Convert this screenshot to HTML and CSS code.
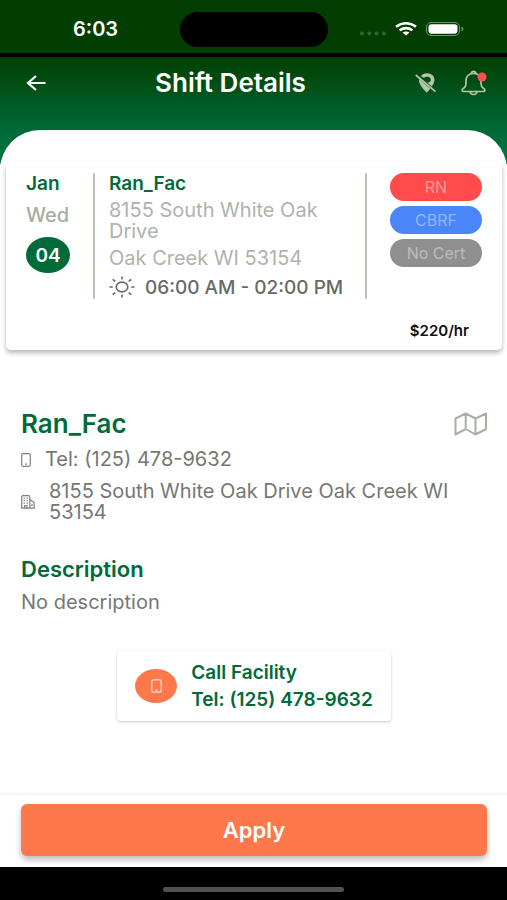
FILE: index.html
```html
<!DOCTYPE html>
<html lang="en">
<head>
<meta charset="utf-8">
<meta name="viewport" content="width=device-width, initial-scale=1">
<title>Shift Details</title>
<link rel="stylesheet" href="styles.css">
</head>
<body>
<div class="status">
  <span class="clock">6:03</span>
  <span class="island"></span>
  <span class="signals">
    <svg class="dots" width="26" height="5" viewBox="0 0 26 5" fill="#2f6630"><circle cx="2" cy="2.500" r="2"/><circle cx="9.300" cy="2.500" r="2"/><circle cx="16.600" cy="2.500" r="2"/><circle cx="24" cy="2.500" r="2"/></svg>
    <svg width="22" height="14" viewBox="0 0 22 14" fill="none" stroke="#fff" stroke-width="2.600"><path d="M1 4.700Q11-2.100 21 4.700M4.600 8.300Q11 3.900 17.400 8.300"/><path d="M7.500 10.500Q11 8.400 14.500 10.500L11 13.600Z" fill="#fff" stroke="none"/></svg>
    <svg width="38" height="14" viewBox="0 0 38 14"><rect x=".5" y=".5" width="33" height="13" rx="4.500" fill="none" stroke="#6d9268"/><rect x="2.500" y="2.300" width="29" height="9.400" rx="3" fill="#fff"/><path d="M35.500 4.500q2 .7 2 2.500t-2 2.500z" fill="#6d9268"/></svg>
  </span>
</div>
<header class="header">
  <button class="icon-btn" aria-label="Back"><svg width="20" height="16" viewBox="0 0 20 16" fill="none" stroke="#fff" stroke-width="2.200"><path d="M19.500 8H2M10 1 2 8l8 7"/></svg></button>
  <h1>Shift Details</h1>
  <div class="actions">
    <button class="icon-btn" aria-label="Location off"><svg width="22" height="20" viewBox="0 0 22 20"><path d="M6 3.200C7.300 1.200 9.300.3 11.700.3c4.600 0 7.800 2.800 7.800 6.500 0 2.200-1.100 4.400-2.700 6.700l-4.500-3.900c1.900.2 3.500-1 3.500-2.800 0-1.700-1.600-3-3.700-3-1.300 0-2.400.5-3 1.200zM4 6.100l11.300 9.700L11.700 19.800C7.500 15.600 3.500 10.700 4 6.100z" fill="#b3c4a9"/><path d="M.8 2 20.500 18.600" stroke="#b3c4a9" stroke-width="1.800"/></svg></button>
    <button class="icon-btn" aria-label="Notifications"><svg width="28" height="26" viewBox="0 0 28 26" fill="none" stroke="#b3c4a9" stroke-width="1.700"><path d="M11 4.200C11 .5 16 .5 16 4.200M13.500 3.500C8.500 3.500 6 6.700 6 11v2.700c0 2.200-.7 3.200-2.400 4.600-2.300 1-1.800 3.200.2 3.200h19.400c2 0 2.500-2.200.2-3.200-1.700-1.400-2.400-2.400-2.400-4.600V11c0-4.300-2.500-7.500-7.500-7.500zM10 21.500c.5 4 6.500 4 7 0"/><circle cx="22" cy="7" r="4.500" fill="#ff5148" stroke="none"/></svg></button>
  </div>
</header>
<main class="sheet">
  <section class="card">
    <div class="shift">
      <div class="date"><b>Jan</b><span class="weekday">Wed</span><span class="day">04</span></div>
      <div class="facts">
        <h2>Ran_Fac</h2>
        <p>8155 South White Oak Drive</p>
        <p class="city">Oak Creek WI 53154</p>
        <div class="time"><svg width="26" height="22" viewBox="0 0 26 22" fill="none" stroke="#666b64" stroke-width="1.600"><ellipse cx="13" cy="11" rx="5.800" ry="4.900"/><path d="M13 .5v3M13 18.500v3M.5 11h3.300M22.200 11h3.300M3.700 3.300l2.600 2.100M22.300 3.300l-2.600 2.100M3.700 18.700l2.600-2.100M22.300 18.700l-2.600-2.100"/></svg><span>06:00 AM - 02:00 PM</span></div>
      </div>
      <div class="tags"><span class="tag rn">RN</span><span class="tag cbrf">CBRF</span><span class="tag cert">No Cert</span></div>
    </div>
    <div class="rate">$220/hr</div>
  </section>
  <section class="facility">
    <div class="title-row"><h2>Ran_Fac</h2>
      <button class="icon-btn" aria-label="Map"><svg width="34" height="24" viewBox="0 0 34 24" fill="none" stroke="#a3b39d" stroke-width="2" stroke-linejoin="round"><path d="M1.500 6.500 11.700 1.500 21.500 6.500 32 1.500V17L21.500 22.500 11.700 17 1.500 22.500zM11.700 1.500V17M21.500 6.500v16"/></svg></button></div>
    <div class="line"><svg width="10" height="14" viewBox="0 0 10 14" fill="none" stroke="#7d817b" stroke-width="1.200"><rect x=".7" y=".7" width="8.600" height="12.600" rx="1.500"/><path d="M4 11.200h2"/></svg><span>Tel: (125) 478-9632</span></div>
    <div class="line"><svg width="14" height="14" viewBox="0 0 14 14" fill="none" stroke="#7d817b" stroke-width="1.200"><path d="M.7 13.200V2q0-1.300 1.300-1.300h5.500q1.300 0 1.300 1.300v11.200zM8.800 4.500l4.400 3v5.700H8.800M3.700 13v-2.500h2.200V13M11 9v2"/><path d="M2.600 3.200h1.300M5.600 3.200h1.300M2.600 5.700h1.300M5.600 5.700h1.300M2.600 8.200h1.300M5.600 8.200h1.300"/></svg><span>8155 South White Oak Drive Oak Creek WI 53154</span></div>
    <h3>Description</h3>
    <p class="desc">No description</p>
  </section>
  <a class="call" href="tel:+11254789632">
    <span class="call-icon"><svg width="11" height="14" viewBox="0 0 11 14" fill="none" stroke="#ffe0d3" stroke-width="1.300"><rect x=".8" y=".8" width="9.400" height="12.400" rx="1.500"/><path d="M4.500 11.200h2"/></svg></span>
    <span class="call-text"><span>Call Facility</span><span>Tel: (125) 478-9632</span></span>
  </a>
</main>
<footer class="footer"><button class="apply">Apply</button></footer>
<div class="home"><span></span></div>
</body>
</html>
```
FILE: styles.css
```css
* { box-sizing: border-box; }
body {
  margin: 0;
  min-height: 100vh;
  display: flex;
  flex-direction: column;
  font-family: Inter, "Open Sans", sans-serif;
  font-size: 19px;
  line-height: 21px;
  color: #747872;
  background: #fff;
}
h1, h2, h3, p { margin: 0; font-weight: 600; }
p { font-weight: 400; }
svg { display: block; flex: none; }
button { font: inherit; border: 0; cursor: pointer; }
.icon-btn { background: none; padding: 0; }

.status {
  display: grid;
  grid-template-columns: 1fr 148px 1fr;
  align-items: center;
  height: 57px;
  background: #023d02;
  border-bottom: 4px solid #000;
  padding-top: 5px;
}
.clock { padding-left: 73px; color: #fff; font-size: 20px; font-weight: 600; }
.island { height: 35px; border-radius: 18px; background: #000; }
.signals { display: flex; align-items: center; justify-content: flex-end; gap: 9px; padding-right: 43px; }
.dots { margin-top: 9px; }

.header {
  display: flex;
  align-items: center;
  height: 107px;
  padding: 0 19px 55px 26px;
  background: linear-gradient(#023f02, #006b38 70%, #00763e);
}
.header h1 { flex: 1; text-align: center; color: #fff; font-size: 26px; line-height: 28px; }
.actions { display: flex; align-items: center; gap: 23px; }

.sheet {
  flex: 1;
  margin-top: -34px;
  padding: 32px 5px 0 6px;
  background: #fff;
  border-radius: 40px 40px 0 0;
}
.card {
  padding: 11px 20px 9px;
  background: #fff;
  border-radius: 5px;
  box-shadow: 0 3px 5px rgba(0, 0, 0, .28);
}
.shift { display: grid; grid-template-columns: 67px 1fr 115px; }
.date { display: flex; flex-direction: column; }
.date b { font-size: 19px; font-weight: 600; color: #006b38; margin-bottom: 11px; }
.weekday { font-size: 20px; font-weight: 500; color: #a5ada0; margin-bottom: 11px; }
.day {
  width: 44px; height: 36px; border-radius: 50%;
  display: grid; place-items: center;
  background: #006b38; color: #fff; font-weight: 600;
}
.facts { padding: 0 14px; border: solid #b8c2b2; border-width: 0 2px; }
.facts h2 { font-size: 19px; color: #006b38; margin-bottom: 6px; }
.facts p { font-size: 20px; color: #adb4aa; }
.facts .city { margin-top: 6px; }
.time { display: flex; align-items: center; gap: 10px; padding: 7px 0 1px; font-weight: 500; color: #666b64; white-space: nowrap; }
.tags { display: flex; flex-direction: column; gap: 5px; padding-left: 23px; }
.tag { height: 28px; border-radius: 14px; display: grid; place-items: center; font-size: 16px; }
.rn { background: #ff4b4b; color: #ff9a9a; }
.cbrf { background: #4a86f7; color: #90b6fb; }
.cert { background: #8f8f8f; color: #bcbcbc; }
.rate { margin-top: 21px; padding-right: 13px; text-align: right; font-size: 15px; font-weight: 600; color: #111; }

.facility { padding: 60px 14px 0 15px; }
.title-row { display: flex; justify-content: space-between; align-items: center; }
.title-row h2 { font-size: 26px; line-height: 28px; color: #006b38; }
.line { display: flex; align-items: center; gap: 14px; margin-top: 11px; font-size: 20px; }
h3 { margin-top: 34px; font-size: 22px; line-height: 24px; color: #006b38; }
.desc { margin-top: 11px; font-size: 20px; }

.call {
  display: flex;
  align-items: center;
  gap: 14px;
  width: fit-content;
  margin: 38px auto 0;
  padding: 11px 18px;
  border-radius: 4px;
  box-shadow: 0 1px 3px rgba(0, 0, 0, .22);
  color: #006b38;
  font-weight: 600;
  text-decoration: none;
}
.call-icon { width: 42px; height: 34px; border-radius: 50%; display: grid; place-items: center; background: #ff784c; }
.call-text { display: grid; gap: 6px; }

.footer { padding: 9px 20px 11px 21px; border-top: 2px solid #f6f6f6; }
.apply {
  width: 100%; height: 52px;
  border-radius: 6px;
  background: #ff784c; color: #fff;
  font-size: 22px; font-weight: 600;
  box-shadow: 0 4px 6px rgba(0, 0, 0, .25);
}
.home { height: 33px; background: #000; display: flex; justify-content: center; align-items: center; padding-top: 12px; }
.home span { width: 181px; height: 5px; border-radius: 3px; background: #515151; }
```
